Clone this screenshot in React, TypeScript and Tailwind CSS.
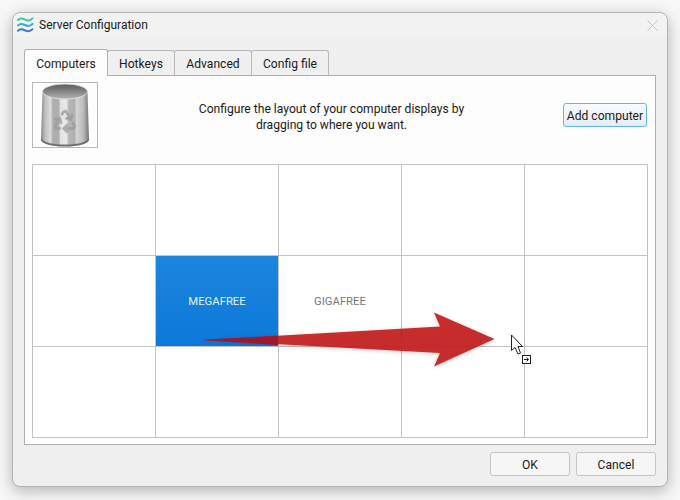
import React from 'react';

const tabs = ['Hotkeys', 'Advanced', 'Config file'];
const tabWidths = ['w-[68px]', 'w-[78px]', 'w-[78px]'];

function LogoIcon() {
  return (
    <svg width="17" height="18" viewBox="0 0 17 18" fill="none" strokeWidth="2" strokeLinecap="round">
      <path d="M1 4C3 2 5 2 8 3.6S13 5.2 15.5 2.4" stroke="#35c9a8" />
      <path d="M1 9.4C3 7.4 5 7.4 8 9S13 10.6 15.5 7.8" stroke="#38a9d8" />
      <path d="M1 14.8C3 12.8 5 12.8 8 14.4S13 16 15.5 13.2" stroke="#3b78dc" />
    </svg>
  );
}

function TrashIcon() {
  return (
    <svg width="50" height="64" viewBox="0 0 50 64">
      <defs>
        <linearGradient id="canBody" x1="0" y1="0" x2="1" y2="0">
          <stop offset="0" stopColor="#858585" />
          <stop offset="0.08" stopColor="#bdbdbd" />
          <stop offset="0.2" stopColor="#dcdcdc" />
          <stop offset="0.25" stopColor="#adadad" />
          <stop offset="0.37" stopColor="#b0b0b0" />
          <stop offset="0.41" stopColor="#e4e4e4" />
          <stop offset="0.53" stopColor="#e8e8e8" />
          <stop offset="0.58" stopColor="#b6b6b6" />
          <stop offset="0.7" stopColor="#b0b0b0" />
          <stop offset="0.74" stopColor="#d4d4d4" />
          <stop offset="0.88" stopColor="#bcbcbc" />
          <stop offset="1" stopColor="#747474" />
        </linearGradient>
        <linearGradient id="canRim" x1="0" y1="0" x2="0" y2="1">
          <stop offset="0" stopColor="#5a5a5a" />
          <stop offset="0.6" stopColor="#8e8e8e" />
          <stop offset="1" stopColor="#b4b4b4" />
        </linearGradient>
      </defs>
      <path d="M2.5 9 L1 56 C1 61 12 63.5 25 63.5 S49 61 49 56 L47.5 9 Z" fill="url(#canBody)" />
      <path d="M1 55 C4 60 14 61.5 25 61.5 S46 60 49 55 L49 57 C48 61 38 63.5 25 63.5 S2 61 1 57 Z" fill="#6f6f6f" />
      <ellipse cx="25" cy="8.5" rx="22.5" ry="7.5" fill="url(#canRim)" stroke="#e2e2e2" strokeWidth="0.9" />
      <g
        transform="translate(12 25) scale(1.08)"
        fill="none"
        stroke="#9a9a9a"
        strokeWidth="2.6"
        strokeLinecap="round"
        strokeLinejoin="round"
        opacity="0.75"
      >
        <path d="M7 19H4.815a1.83 1.83 0 0 1-1.57-.881 1.785 1.785 0 0 1-.004-1.784L7.196 9.5" />
        <path d="M11 19h8.203a1.83 1.83 0 0 0 1.556-.89 1.784 1.784 0 0 0 0-1.775l-1.226-2.12" />
        <path d="m14 16-3 3 3 3" />
        <path d="M8.293 13.596 7.196 9.5 3.1 10.598" />
        <path d="m9.344 5.811 1.093-1.892A1.83 1.83 0 0 1 11.985 3a1.784 1.784 0 0 1 1.546.888l3.943 6.843" />
        <path d="m13.378 9.633 4.096 1.098 1.097-4.096" />
      </g>
    </svg>
  );
}

function Arrow() {
  return (
    <svg className="absolute left-0 top-0 pointer-events-none" width="680" height="500" viewBox="0 0 680 500">
      <defs>
        <filter id="arrowShadow" x="-10%" y="-50%" width="120%" height="200%">
          <feDropShadow dx="0" dy="1" stdDeviation="2" floodColor="#000" floodOpacity="0.22" />
        </filter>
      </defs>
      <polygon
        points="201,340 440,326.5 434,312.5 494.5,339 434,366.5 440,353"
        fill="#c41c1c"
        fillOpacity="0.92"
        filter="url(#arrowShadow)"
      />
      {/* the part over the blue tile reads darker */}
      <polygon points="201,340 278,335.7 278,345" fill="#a0182e" />
    </svg>
  );
}

function Cursor() {
  return (
    <svg className="absolute left-[510px] top-[334px] pointer-events-none" width="26" height="32" viewBox="0 0 26 32">
      <path d="M1.5 1 V16.5 L5 13.5 L8 20 L10.5 19 L8 12.5 L12.5 12.5 Z" fill="#fff" stroke="#222" strokeWidth="1" strokeLinejoin="round" />
      <rect x="12.5" y="21.5" width="8" height="8" fill="#fff" stroke="#222" strokeWidth="1" />
      <path d="M14 25.5 H18.5 M16.5 23.5 L18.5 25.5 L16.5 27.5" fill="none" stroke="#222" strokeWidth="1" />
    </svg>
  );
}

export default function App() {
  return (
    <div
      className="relative w-[680px] h-[500px] overflow-hidden bg-[#f8f8f8] p-3 text-[12.1px] text-[#1a1a1a]"
      style={{ fontFamily: 'Roboto, "Noto Sans", sans-serif' }}
    >
      <div className="flex h-[475px] w-[656px] flex-col rounded-lg border border-[#b4b4b4] bg-[#efefef] shadow-[0_4px_16px_rgba(0,0,0,0.28)]">
        {/* title bar */}
        <div className="flex h-[24px] shrink-0 items-center rounded-t-lg bg-[#f2f2f2] pl-[4px] pr-[9px]">
          <LogoIcon />
          <span className="ml-[5px] text-[12px]">Server Configuration</span>
          <svg className="ml-auto" width="11" height="11" viewBox="0 0 11 11" stroke="#c4c4c4" strokeWidth="1">
            <path d="M.5.5l10 10M10.5.5l-10 10" />
          </svg>
        </div>

        {/* tabs */}
        <div className="ml-[11px] mt-[11px] flex h-[27px] shrink-0 items-end">
          <div className="relative z-10 -mb-px flex h-[27px] w-[84px] items-center justify-center rounded-t-[3px] border border-b-0 border-[#b0b0b0] bg-[#fdfdfd] pt-[2px]">
            Computers
          </div>
          {tabs.map((t, i) => (
            <div
              key={t}
              className={`flex h-[25px] ${tabWidths[i]} -ml-px items-center justify-center rounded-t-[3px] border border-b-0 border-[#b8b8b8] bg-[#f0f0f0] pt-[3px]`}
            >
              {t}
            </div>
          ))}
        </div>

        {/* tab panel */}
        <div className="mx-[11px] flex h-[370px] shrink-0 flex-col border border-[#aeaeae] bg-[#fdfdfd] px-[7px] pt-[6px]">
          <div className="flex h-[66px] shrink-0 items-start">
            <div className="flex h-[66px] w-[66px] shrink-0 items-center justify-center border border-[#b8b8b8]">
              <TrashIcon />
            </div>
            <div className="flex-1 pl-[2px] pt-[19px] text-center leading-[16px]">
              Configure the layout of your computer displays by
              <br />
              dragging to where you want.
            </div>
            <button className="mr-[1px] mt-[21px] h-[24px] w-[84px] whitespace-nowrap rounded-[3px] border border-[#62b5f0] bg-gradient-to-b from-[#f9fbfd] to-[#e4edf5] pt-[2px] text-[12.1px] leading-none">
              Add computer
            </button>
          </div>

          <div className="mt-[16px] grid w-[616px] grid-cols-5 grid-rows-3 border-l border-t border-[#c2c2c2]">
            {Array.from({ length: 15 }).map((_, i) => (
              <div
                key={i}
                className={
                  i === 6
                    ? 'flex h-[91px] w-[123px] items-center justify-center border-b border-r border-[#c2c2c2] bg-gradient-to-b from-[#1c85dd] to-[#0b79d9] pt-[2px] text-[11.3px] text-[#e8f2fb]'
                    : i === 7
                      ? 'flex h-[91px] w-[123px] items-center justify-center border-b border-r border-[#c2c2c2] bg-white pt-[2px] text-[11.3px] text-[#777]'
                      : 'h-[91px] w-[123px] border-b border-r border-[#c2c2c2] bg-white'
                }
              >
                {i === 6 ? 'MEGAFREE' : i === 7 ? 'GIGAFREE' : null}
              </div>
            ))}
          </div>
        </div>

        {/* footer */}
        <div className="mr-[11px] mt-[7px] flex justify-end gap-[6px]">
          <button className="h-[24px] w-[80px] rounded-[3px] border border-[#c4c4c4] bg-[#f6f6f6] pt-[2px] text-[12.1px] leading-none">OK</button>
          <button className="h-[24px] w-[80px] rounded-[3px] border border-[#c4c4c4] bg-[#f6f6f6] pt-[2px] text-[12.1px] leading-none">Cancel</button>
        </div>
      </div>

      <Arrow />
      <Cursor />
    </div>
  );
}
